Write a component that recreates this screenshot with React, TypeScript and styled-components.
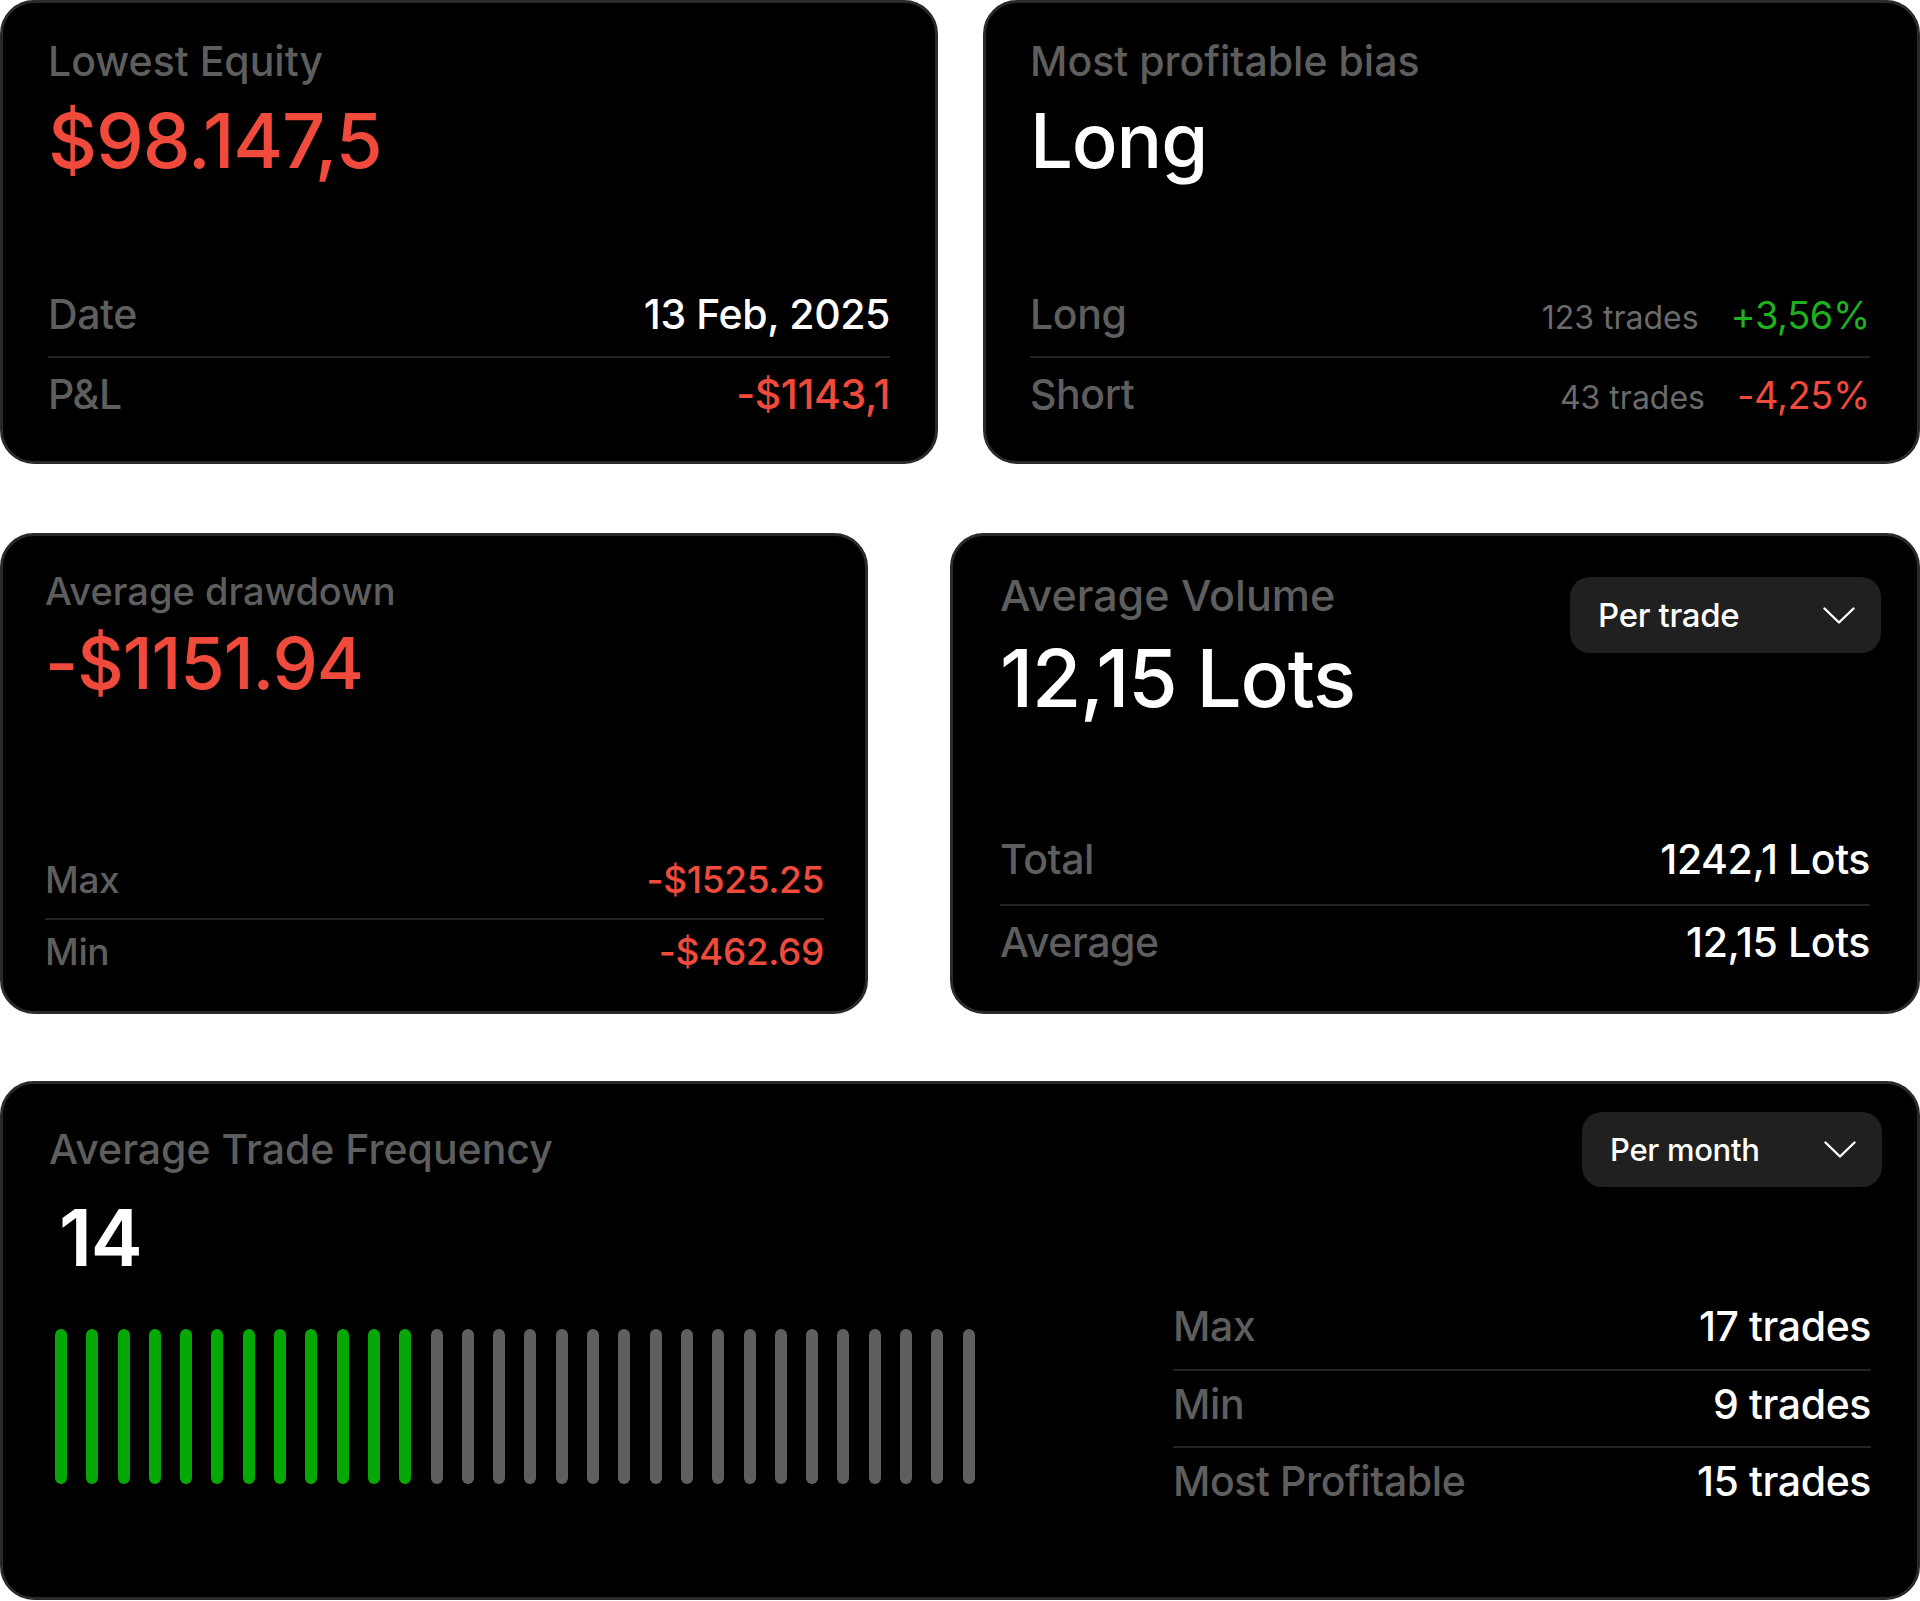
import styled, { createGlobalStyle } from 'styled-components';

const GlobalStyle = createGlobalStyle`
  html, body {
    margin: 0;
    padding: 0;
    background: #ffffff;
  }
  body {
    font-family: Inter, "Noto Sans", "Liberation Sans", sans-serif;
    -webkit-font-smoothing: antialiased;
  }
  * { box-sizing: border-box; }
`;

const RED = '#EF4A3B';
const GREEN = '#1FB01F';
const GRAY = '#5E5E5E';

const Page = styled.main`
  width: 1920px;
  height: 1601px;
  display: flex;
  flex-direction: column;
  overflow: hidden;
`;

const Row = styled.div<{ $gap: number; $mt?: number }>`
  display: flex;
  gap: ${({ $gap }) => $gap}px;
  margin-top: ${({ $mt = 0 }) => $mt}px;
`;

const Card = styled.section<{ $w: number; $h: number; $pad: string }>`
  width: ${({ $w }) => $w}px;
  height: ${({ $h }) => $h}px;
  flex-shrink: 0;
  padding: ${({ $pad }) => $pad};
  background: #000;
  border: 3px solid #2a2a2a;
  border-radius: 34px;
  display: flex;
  flex-direction: column;
`;

const Header = styled.div`
  display: flex;
  justify-content: space-between;
  align-items: flex-start;
`;

const Title = styled.h2<{ $size: number }>`
  margin: 0;
  font-size: ${({ $size }) => $size}px;
  line-height: 1;
  font-weight: 500;
  letter-spacing: 0;
  color: ${GRAY};
`;

const BigValue = styled.div<{ $size: number; $color: string; $mt: number; $weight?: number; $indent?: number }>`
  margin-top: ${({ $mt }) => $mt}px;
  margin-left: ${({ $indent = 0 }) => $indent}px;
  font-size: ${({ $size }) => $size}px;
  line-height: 1;
  font-weight: ${({ $weight = 500 }) => $weight};
  letter-spacing: -0.015em;
  color: ${({ $color }) => $color};
`;

const StatList = styled.div<{ $auto?: boolean }>`
  margin-top: ${({ $auto = true }) => ($auto ? 'auto' : '0')};
  display: flex;
  flex-direction: column;
`;

const StatRow = styled.div<{ $pt: number; $pb: number }>`
  display: flex;
  justify-content: space-between;
  align-items: baseline;
  padding: ${({ $pt, $pb }) => `${$pt}px 0 ${$pb}px`};

  & + & {
    border-top: 2px solid #232323;
  }
`;

const Label = styled.span<{ $size: number }>`
  font-size: ${({ $size }) => $size}px;
  line-height: 1;
  font-weight: 500;
  letter-spacing: -0.01em;
  color: ${GRAY};
`;

const Value = styled.span<{ $size: number; $color?: string; $weight?: number }>`
  font-size: ${({ $size }) => $size}px;
  line-height: 1;
  font-weight: ${({ $weight = 500 }) => $weight};
  letter-spacing: -0.01em;
  color: ${({ $color = '#fff' }) => $color};
`;

const BiasSide = styled.span`
  display: flex;
  align-items: baseline;
  gap: 32px;
`;

const Trades = styled.span`
  font-size: 32px;
  line-height: 1;
  font-weight: 400;
  color: #6a6a6a;
`;

const Dropdown = styled.button<{ $w: number; $h: number; $font: number; $mt?: number }>`
  width: ${({ $w }) => $w}px;
  height: ${({ $h }) => $h}px;
  margin-top: ${({ $mt = 0 }) => $mt}px;
  margin-right: -11px;
  flex-shrink: 0;
  display: flex;
  align-items: center;
  justify-content: space-between;
  padding: 0 26px 0 28px;
  border: none;
  border-radius: 20px;
  background: #202020;
  color: #fff;
  font-family: inherit;
  font-size: ${({ $font }) => $font}px;
  font-weight: 500;
  letter-spacing: -0.01em;
  cursor: pointer;
`;

const Chevron = () => (
  <svg width="32" height="17" viewBox="0 0 32 17" fill="none">
    <path d="M1.5 1.5 L16 15.5 L30.5 1.5" stroke="#fff" strokeWidth="2.4" strokeLinecap="round" strokeLinejoin="round" />
  </svg>
);

const FreqBody = styled.div`
  flex: 1;
  display: grid;
  grid-template-columns: 1fr 698px;
  column-gap: 40px;
`;

const FreqLeft = styled.div`
  display: flex;
  flex-direction: column;
  padding-top: 17px;
`;

const FreqRight = styled.div`
  display: flex;
  flex-direction: column;
  align-items: stretch;
`;

const DropdownSlot = styled.div`
  display: flex;
  justify-content: flex-end;
  margin-bottom: 106px;
`;

const Bars = styled.div`
  display: flex;
  gap: 19.3px;
  margin: 52px 0 0 6px;
`;

const Bar = styled.span<{ $on: boolean }>`
  width: 12px;
  height: 155px;
  border-radius: 6px;
  background: ${({ $on }) => ($on ? '#05A805' : '#5f5f5f')};
`;

type Stat = { label: string; value: string; color?: string };

function Stats({ rows, size, pt, pb, auto }: { rows: Stat[]; size: number; pt: number; pb: number; auto?: boolean }) {
  return (
    <StatList $auto={auto}>
      {rows.map((r) => (
        <StatRow key={r.label} $pt={pt} $pb={pb}>
          <Label $size={size}>{r.label}</Label>
          <Value $size={size} $color={r.color}>{r.value}</Value>
        </StatRow>
      ))}
    </StatList>
  );
}

const bias = [
  { label: 'Long', trades: '123 trades', pct: '+3,56%', color: GREEN },
  { label: 'Short', trades: '43 trades', pct: '-4,25%', color: RED },
];

export default function App() {
  const bars = Array.from({ length: 30 }, (_, i) => i < 12);

  return (
    <>
      <GlobalStyle />
      <Page>
        <Row $gap={45}>
          <Card $w={938} $h={464} $pad="38px 45px 25px 45px">
            <Title $size={41}>Lowest Equity</Title>
            <BigValue $size={76} $color={RED} $mt={20}>$98.147,5</BigValue>
            <Stats
              size={41}
              pt={15.5}
              pb={21.5}
              rows={[
                { label: 'Date', value: '13 Feb, 2025' },
                { label: 'P&L', value: '-$1143,1', color: RED },
              ]}
            />
          </Card>

          <Card $w={937} $h={464} $pad="38px 47px 25px 44px">
            <Title $size={41}>Most profitable bias</Title>
            <BigValue $size={76} $color="#fff" $mt={20}>Long</BigValue>
            <StatList>
              {bias.map((b) => (
                <StatRow key={b.label} $pt={15.5} $pb={21.5}>
                  <Label $size={41}>{b.label}</Label>
                  <BiasSide>
                    <Trades>{b.trades}</Trades>
                    <Value $size={38} $weight={400} $color={b.color}>{b.pct}</Value>
                  </BiasSide>
                </StatRow>
              ))}
            </StatList>
          </Card>
        </Row>

        <Row $gap={82} $mt={69}>
          <Card $w={868} $h={481} $pad="36px 41px 21px 42px">
            <Title $size={38}>Average drawdown</Title>
            <BigValue $size={72} $color={RED} $mt={17}>-$1151.94</BigValue>
            <Stats
              size={37}
              pt={13}
              pb={20}
              rows={[
                { label: 'Max', value: '-$1525.25', color: RED },
                { label: 'Min', value: '-$462.69', color: RED },
              ]}
            />
          </Card>

          <Card $w={970} $h={481} $pad="38px 47px 24px 47px">
            <Header>
              <div>
                <Title $size={43}>Average Volume</Title>
                <BigValue $size={80} $color="#fff" $mt={21}>12,15 Lots</BigValue>
              </div>
              <Dropdown $w={311} $h={76} $font={33} $mt={3}>
                Per trade
                <Chevron />
              </Dropdown>
            </Header>
            <Stats
              size={41}
              pt={16}
              pb={24}
              rows={[
                { label: 'Total', value: '1242,1 Lots' },
                { label: 'Average', value: '12,15 Lots' },
              ]}
            />
          </Card>
        </Row>

        <Row $gap={0} $mt={67}>
          <Card $w={1920} $h={519} $pad="28px 46px 66px 46px">
            <FreqBody>
              <FreqLeft>
                <Title $size={41}>Average Trade Frequency</Title>
                <BigValue $size={78} $color="#fff" $mt={29} $weight={600} $indent={10}>
                  14
                </BigValue>
                <Bars>
                  {bars.map((on, i) => (
                    <Bar key={i} $on={on} />
                  ))}
                </Bars>
              </FreqLeft>
              <FreqRight>
                <DropdownSlot>
                  <Dropdown $w={300} $h={75} $font={31}>
                    Per month
                    <Chevron />
                  </Dropdown>
                </DropdownSlot>
                <Stats
                  size={41}
                  pt={13}
                  pb={21.5}
                  auto={false}
                  rows={[
                    { label: 'Max', value: '17 trades' },
                    { label: 'Min', value: '9 trades' },
                    { label: 'Most Profitable', value: '15 trades' },
                  ]}
                />
              </FreqRight>
            </FreqBody>
          </Card>
        </Row>
      </Page>
    </>
  );
}
